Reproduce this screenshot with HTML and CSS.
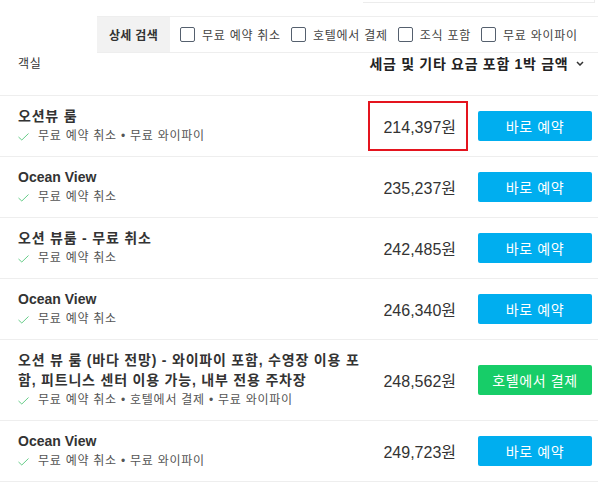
FILE: index.html
```
<!DOCTYPE html>
<html lang="ko">
<head>
    <meta charset="utf-8">
    <title>객실 요금</title>
    <link rel="stylesheet" href="styles.css">
</head>
<body>
    <div class="page">
        <div class="topbox"></div>

        <div class="filters">
            <div class="filters-title">상세 검색</div>
            <label class="filter"><span class="box"></span>무료 예약 취소</label>
            <label class="filter"><span class="box"></span>호텔에서 결제</label>
            <label class="filter"><span class="box"></span>조식 포함</label>
            <label class="filter"><span class="box"></span>무료 와이파이</label>
        </div>

        <div class="list-head">
            <span class="head-room">객실</span>
            <span class="head-price">세금 및 기타 요금 포함 1박 금액
                <svg class="chev" width="8" height="5" viewBox="0 0 8 5"><path d="M1 1 L4 4 L7 1" fill="none" stroke="#333" stroke-width="1.5"/></svg>
            </span>
        </div>

        <ul class="rooms">
            <li class="room">
                <div class="info">
                    <div class="name">오션뷰 룸</div>
                    <div class="perks"><svg class="check" width="11" height="8" viewBox="0 0 11 8"><path d="M0.5 4 L3.8 7 L10.5 0.5" fill="none" stroke="#66cc88" stroke-width="1"/></svg>무료 예약 취소 • 무료 와이파이</div>
                </div>
                <div class="price marked">214,397원</div>
                <button class="btn book">바로 예약</button>
            </li>
            <li class="room">
                <div class="info">
                    <div class="name latin">Ocean View</div>
                    <div class="perks"><svg class="check" width="11" height="8" viewBox="0 0 11 8"><path d="M0.5 4 L3.8 7 L10.5 0.5" fill="none" stroke="#66cc88" stroke-width="1"/></svg>무료 예약 취소</div>
                </div>
                <div class="price">235,237원</div>
                <button class="btn book">바로 예약</button>
            </li>
            <li class="room">
                <div class="info">
                    <div class="name">오션 뷰룸 - 무료 취소</div>
                    <div class="perks"><svg class="check" width="11" height="8" viewBox="0 0 11 8"><path d="M0.5 4 L3.8 7 L10.5 0.5" fill="none" stroke="#66cc88" stroke-width="1"/></svg>무료 예약 취소</div>
                </div>
                <div class="price">242,485원</div>
                <button class="btn book">바로 예약</button>
            </li>
            <li class="room">
                <div class="info">
                    <div class="name latin">Ocean View</div>
                    <div class="perks"><svg class="check" width="11" height="8" viewBox="0 0 11 8"><path d="M0.5 4 L3.8 7 L10.5 0.5" fill="none" stroke="#66cc88" stroke-width="1"/></svg>무료 예약 취소</div>
                </div>
                <div class="price">246,340원</div>
                <button class="btn book">바로 예약</button>
            </li>
            <li class="room">
                <div class="info">
                    <div class="name">오션 뷰 룸 (바다 전망) - 와이파이 포함, 수영장 이용 포함, 피트니스 센터 이용 가능, 내부 전용 주차장</div>
                    <div class="perks"><svg class="check" width="11" height="8" viewBox="0 0 11 8"><path d="M0.5 4 L3.8 7 L10.5 0.5" fill="none" stroke="#66cc88" stroke-width="1"/></svg>무료 예약 취소 • 호텔에서 결제 • 무료 와이파이</div>
                </div>
                <div class="price">248,562원</div>
                <button class="btn pay">호텔에서 결제</button>
            </li>
            <li class="room">
                <div class="info">
                    <div class="name latin">Ocean View</div>
                    <div class="perks"><svg class="check" width="11" height="8" viewBox="0 0 11 8"><path d="M0.5 4 L3.8 7 L10.5 0.5" fill="none" stroke="#66cc88" stroke-width="1"/></svg>무료 예약 취소 • 무료 와이파이</div>
                </div>
                <div class="price">249,723원</div>
                <button class="btn book">바로 예약</button>
            </li>
        </ul>
    </div>
</body>
</html>
```

FILE: styles.css
```
body {
    margin: 0;
    background: #fff;
    font-family: "Liberation Sans", "Noto Sans CJK KR", sans-serif;
    color: #333;
}

.page {
    width: 598px;
}

.topbox {
    width: 231px;
    height: 2px;
    margin-left: 363px;
    border-right: 1px solid #ececec;
    border-bottom: 1px solid #ececec;
}

/* filter bar */
.filters {
    display: flex;
    align-items: center;
    margin: 13px 0 0 97px;
    height: 35px;
    border-top: 1px solid #eee;
    border-bottom: 1px solid #eee;
    font-size: 12px;
    letter-spacing: 0.75px;
    color: #444;
}

.filters-title {
    align-self: stretch;
    display: flex;
    align-items: center;
    padding: 0 12px 0 12px;
    background: #f2f2f2;
    font-weight: bold;
    letter-spacing: 0.3px;
    color: #333;
    margin-right: 10px;
}

.filter {
    display: flex;
    align-items: center;
    margin-right: 10px;
}

.box {
    width: 13px;
    height: 13px;
    border: 1px solid #55606e;
    border-radius: 2px;
    margin-right: 7px;
}

/* header */
.list-head {
    display: flex;
    justify-content: space-between;
    padding: 1px 0 21px 18px;
    border-bottom: 1px solid #eee;
    line-height: 20px;
}

.head-room {
    font-size: 12px;
    letter-spacing: 0.6px;
}

.head-price {
    font-size: 14px;
    font-weight: bold;
    letter-spacing: 0.7px;
    color: #222;
    padding-right: 14px;
}

.chev {
    margin-left: 3px;
    vertical-align: 3px;
}

/* rooms */
.rooms {
    list-style: none;
    margin: 0;
    padding: 0;
}

.room {
    display: flex;
    align-items: center;
    min-height: 60px;
    padding: 0 6px 0 18px;
    border-bottom: 1px solid #eee;
}

.info {
    width: 345px;
    margin-right: 5px;
    padding: 10px 0;
}

.name {
    font-size: 14px;
    font-weight: bold;
    line-height: 20px;
    letter-spacing: 0.8px;
    word-break: break-all;
    color: #333;
}

.name.latin {
    letter-spacing: 0;
}

.perks {
    font-size: 12px;
    line-height: 20px;
    letter-spacing: 0.75px;
    color: #555;
}

.check {
    margin-right: 9px;
    vertical-align: -1px;
}

.price {
    width: 86px;
    height: 46px;
    padding-right: 10px;
    border: 2px solid transparent;
    display: flex;
    align-items: center;
    justify-content: flex-end;
    font-size: 16px;
    color: #333;
}

.price.marked {
    border-color: #e4141e;
}

.btn {
    width: 114px;
    height: 30px;
    margin-left: 10px;
    border: 0;
    border-radius: 2px;
    color: #fff;
    font-family: "Liberation Sans", "Noto Sans CJK KR", sans-serif;
    font-size: 14px;
    letter-spacing: 0.6px;
    cursor: pointer;
}

.book {
    background: #00aeef;
}

.pay {
    background: #17cd68;
}
```
